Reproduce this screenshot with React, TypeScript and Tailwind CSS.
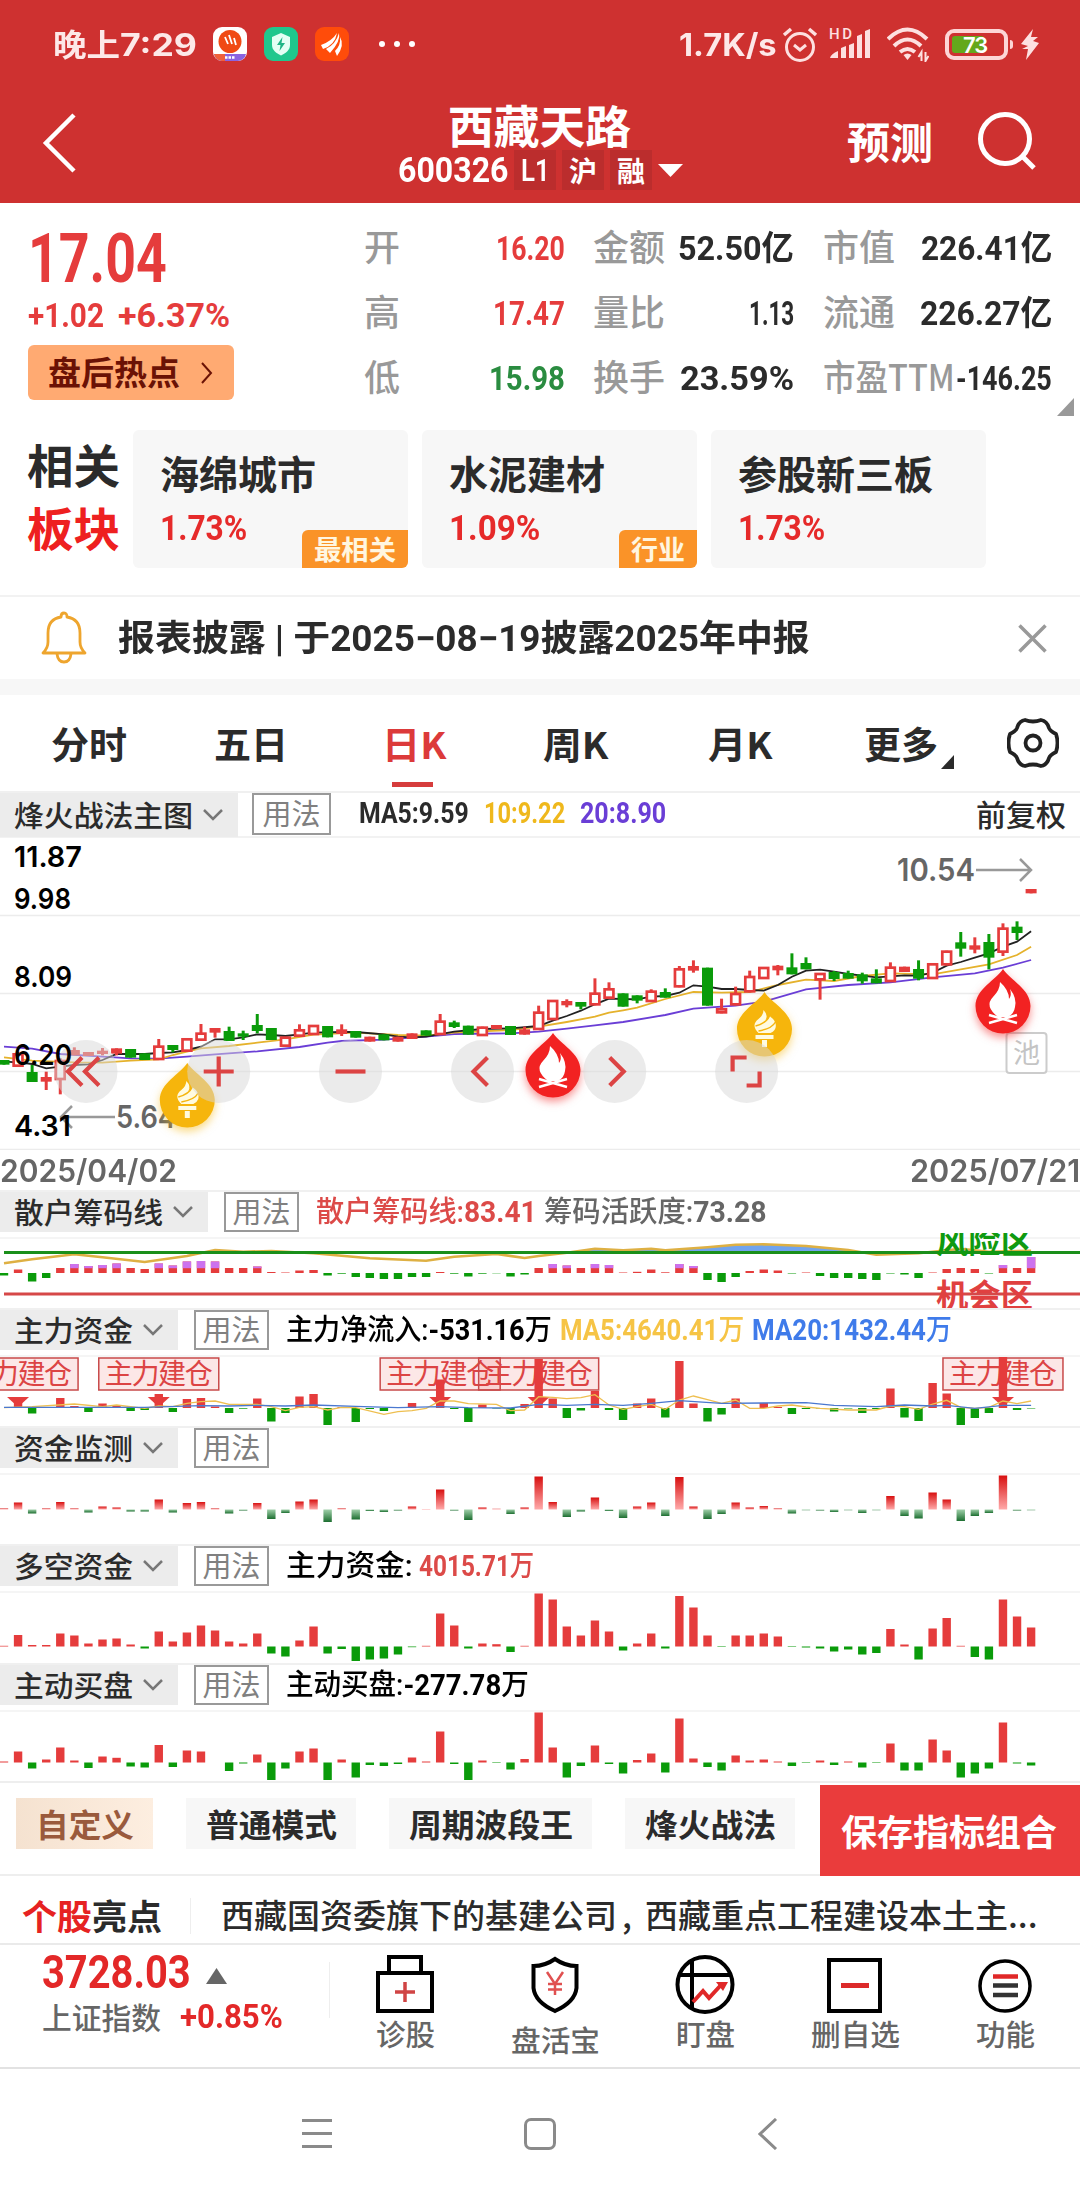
import { useLayoutEffect, useRef, useState, type ReactNode } from "react";
import { clsx } from "clsx";

const STEP = 14.07;
const cx = (i: number) => 4 + STEP * i;

const RED = "#e53c3c";
const GREEN = "#0a9b0a";

// Squeezes or stretches a run of text to a fixed width
function Fit({ w, className, children }: { w: number; className?: string; children: ReactNode }) {
  const ref = useRef<HTMLSpanElement>(null);
  const [scale, setScale] = useState(1);
  useLayoutEffect(() => {
    if (ref.current) setScale(w / ref.current.offsetWidth);
  }, [w]);
  return (
    <span className={clsx("block shrink-0 whitespace-nowrap leading-none", className)} style={{ width: w }}>
      <span ref={ref} className="inline-block origin-left" style={{ transform: `translateY(var(--lift)) scaleX(${scale})` }}>
        {children}
      </span>
    </span>
  );
}

const num = "font-[Roboto,'Noto_Sans_CJK_SC',sans-serif] [--lift:0em]";
const inter = "font-[Inter,'Noto_Sans_CJK_SC',sans-serif] [--lift:0em]";

type Candle = [kind: "r" | "s" | "g", top: number, bottom: number, high?: number, low?: number];

const candles: Candle[] = [
  ["g", 480, 494], ["r", 460, 500, 455], ["g", 516, 546, 495], ["s", 531, 545, 515, 570], ["r", 480, 540, 475, 583],
  ["s", 450, 466, 442], ["s", 456, 468], ["s", 452, 462, 444, 466], ["s", 445, 461, 445, 466], ["g", 447, 473],
  ["g", 460, 480], ["r", 437, 480, 417], ["g", 435, 450, 435, 457], ["r", 415, 455], ["r", 398, 422, 372],
  ["s", 384, 398, 384, 413], ["g", 393, 423, 380], ["g", 400, 410, 392, 420], ["g", 375, 393, 342, 400], ["g", 384, 420],
  ["r", 410, 440], ["r", 388, 410, 373], ["r", 375, 405], ["g", 378, 412], ["s", 388, 402, 373, 408],
  ["g", 393, 413], ["s", 410, 425], ["g", 403, 421], ["s", 410, 425], ["s", 400, 417],
  ["g", 391, 407], ["r", 362, 405, 342], ["g", 367, 381, 362, 384], ["g", 377, 404], ["r", 380, 408],
  ["s", 375, 387], ["g", 378, 405], ["s", 388, 404, 380], ["r", 335, 390, 317], ["r", 300, 360],
  ["s", 303, 316, 298, 322], ["g", 306, 320, 306, 328], ["r", 278, 316, 235], ["r", 265, 296, 247], ["g", 280, 320],
  ["g", 286, 302, 286, 310], ["r", 272, 306, 268], ["g", 276, 293, 265], ["r", 205, 262, 198], ["s", 198, 212, 181, 218],
  ["g", 203, 317], ["r", 325, 340, 296], ["r", 279, 316, 260], ["r", 228, 277, 212], ["r", 201, 237],
  ["s", 197, 211, 195, 226], ["g", 202, 223, 160], ["g", 189, 208, 172], ["r", 219, 241, 219, 299], ["g", 216, 237, 213, 243],
  ["g", 219, 236, 212], ["g", 223, 244, 218, 251], ["g", 235, 250, 208], ["r", 200, 246, 187], ["s", 200, 216],
  ["g", 207, 236, 181, 241], ["r", 190, 237], ["r", 152, 196], ["g", 127, 146, 96, 170], ["s", 136, 149, 112, 160],
  ["g", 126, 173, 102, 208], ["r", 83, 158, 70, 168], ["g", 80, 99, 64, 120], ["s", -33, -20],
];

const ma5 = [
  [0, 485], [1, 487], [2, 492], [3, 505], [4, 500], [5, 495], [6, 493], [7, 480], [8, 462], [10, 462], [11, 459], [12, 457],
  [13, 450], [14, 440], [15, 418], [16, 418], [17, 412], [18, 403], [19, 405], [20, 408], [21, 403], [22, 398], [24, 396],
  [25, 396], [27, 403], [28, 410], [29, 412], [30, 410], [32, 395], [34, 387], [36, 385], [38, 378], [39, 362], [40, 348],
  [41, 332], [42, 313], [43, 296], [44, 297], [45, 298], [46, 290], [47, 288], [48, 278], [49, 256], [50, 260], [51, 267],
  [52, 267], [53, 270], [54, 272], [55, 255], [56, 230], [57, 212], [58, 209], [59, 215], [60, 222], [61, 227], [62, 232],
  [63, 229], [64, 226], [65, 227], [66, 218], [67, 197], [68, 186], [69, 173], [70, 160], [71, 140], [72, 125], [73, 94],
];
const ma10 = [
  [0, 472], [2, 482], [5, 487], [7, 488], [9, 482], [11, 478], [12, 465], [13, 455], [14, 445], [16, 438], [18, 428],
  [20, 418], [22, 404], [25, 398], [28, 405], [30, 407], [32, 398], [36, 390], [38, 380], [40, 366], [42, 350], [43, 338],
  [44, 331], [45, 323], [47, 297], [49, 276], [51, 278], [53, 276], [55, 255], [57, 239], [59, 243], [61, 228], [63, 220],
  [66, 223], [68, 208], [70, 193], [72, 165], [73, 140],
];
const ma20 = [
  [0, 440], [2, 446], [4, 462], [7, 470], [9, 475], [11, 476], [13, 470], [15, 463], [18, 454], [21, 441], [23, 428],
  [24, 423], [27, 419], [30, 410], [32, 402], [36, 400], [38, 395], [40, 386], [42, 376], [44, 366], [47, 345], [49, 326],
  [52, 317], [54, 305], [57, 268], [60, 255], [63, 247], [66, 232], [69, 220], [71, 203], [73, 180],
];

const retail = [
  -2.5, 3.5, -8.5, -5, 5, 9, 7, 8, 9.5, 5, 4, 9.5, 7.5, 11.5, 12, 11.5, 5, 5, 6.5, 1, 0.5, 2.5, 3, -2.5, -0.7, -4, -5, -6, -6,
  -4, -4, 1, -0.7, -3.5, -0.7, -0.3, -3.5, -1.5, 5, 9, 7.5, 5, 9, 8, 0.5, 1.2, 3.5, 0.7, 9, 7, -7, -9, -4, 2, 3.5, 2.5, -0.5,
  0.5, -3, -5, -5, -6, -7, -0.5, -1.5, -5, 0.5, 4, 5, 4, -0.5, 8, 5, 16,
];
const retailLine = [
  [0, 220], [2, 208], [5, 193], [7, 202], [10, 216], [13, 198], [15, 180], [17, 185], [19, 183], [22, 190], [26, 205],
  [30, 212], [32, 200], [35, 192], [37, 204], [38, 198], [40, 188], [42, 176], [44, 181], [46, 176], [47, 181], [50, 172],
  [52, 164], [54, 163], [57, 168], [60, 180], [62, 194], [65, 190], [68, 176], [70, 185], [73, 182],
];

const mainFund = [
  0, 7, -5.5, 0, 10, 2, -4, 4.5, 2.5, -3, -2, 14, -4, 9, 10, 1.5, -5, -0.7, 9.5, -13.5, -5, 11.5, 14, -18, 1, -14, -1, -3, 0,
  5, 0, 28.5, -1, -14, 3.5, -0.5, -6, 4, 49, 9.5, -10, -2.5, 17, -2, -12, 4.5, 9.5, -9.5, 47, 4.5, -13.5, -6.5, 9.5, 0, 5, 1,
  -6, -1, -0.5, -3.5, -0.5, -5, -1, 19.5, -9.5, -13, 25, 14.5, -17, -10, -5, 51, -2, -0.5,
];
const fundMa5 = [
  [0, 653], [2, 650], [5, 642], [7, 650], [8, 645], [10, 655], [11, 648], [12, 650], [13, 640], [14, 635], [15, 633],
  [16, 643], [18, 643], [19, 650], [20, 662], [21, 652], [22, 650], [23, 660], [24, 652], [25, 653], [27, 673], [28, 665],
  [29, 662], [30, 655], [31, 633], [32, 633], [33, 641], [35, 643], [36, 662], [37, 660], [38, 620], [39, 622], [40, 626],
  [41, 623], [42, 614], [43, 645], [44, 658], [45, 650], [46, 643], [47, 658], [48, 630], [49, 618], [50, 629], [51, 640],
  [52, 630], [53, 655], [54, 655], [55, 648], [56, 645], [57, 651], [58, 655], [60, 660], [62, 660], [63, 648], [64, 650],
  [65, 658], [66, 642], [67, 631], [68, 652], [69, 655], [70, 652], [71, 633], [72, 641], [73, 633],
];
const fundMa20 = [
  [0, 652], [10, 652], [14, 647], [16, 648], [18, 646], [20, 648], [22, 645], [25, 649], [28, 653], [31, 650], [33, 653],
  [36, 654], [38, 643], [40, 646], [42, 643], [44, 646], [46, 640], [48, 632], [51, 640], [57, 638], [59, 646], [62, 650],
  [64, 645], [66, 648], [67, 646], [69, 655], [71, 646], [73, 646],
];

const monitor = [
  1, 7, -4, 1, 7.5, 1, -3, 3, 2, -2, -2, 10, -3, 6.5, 7.5, 1, -4, -1, 6.5, -9.5, -3.5, 8, 10, -12.5, 1, -10, -1.5, -2.5, -1,
  3, 0.5, 20, -1, -10.5, 2, 0.7, -4.5, 2, 33, 7.5, -7.5, -2, 12, -1.5, -8.5, 3, 7, -6.5, 32.5, 3, -9.5, -4.5, 7, 2, 3.5, 1,
  -4, -0.7, -1, -2.5, -0.7, -3.5, -0.7, 13.5, -6.5, -9, 17, 10, -11.5, -6.5, -3.5, 34, -1, -0.7,
];
const longShort = [
  0.7, 11.5, 1.5, 1.5, 13, 11, 3, 7, 8, 2, -2, 15, 5, 14, 21, 16, 5, 3, 13, -7, -10, 6, 20, -7, -2.5, -17, -13, -12, -8, -0.7,
  0.7, 33, 21, -2, 3, 2.3, -5.5, 0.7, 53, 47, 20, 11, 26, 15, -4, 3, 13, -2, 50.5, 39, 11, -0.5, 11, 11, 13, 10, -0.5, -1, -2,
  -5, -3, -8, -6.5, 17.5, 2, -13, 18, 28.5, 0.7, -10.5, -13, 47, 30, 19,
];
const activeBuy = [
  1, 11, -6, 3, 15, 2, -5.5, 6, 4.7, -4, -5, 17.5, -4.5, 12, 11, 0, -8.5, -1, 8, -17.5, -6, 11, 14, -20, 3, -15, -2.5, -3.5,
  -1.5, 5, 1, 31, -1.5, -19, 2, -0.5, -7, 3.5, 50, 15, -15, -3.5, 17, -1.5, -11, 2.5, 9, -10, 44, 4, -4.5, -8, 7, 2, 3, 1,
  -3.5, -0.5, 2, -2.5, 1, -5, -0.5, 19, -8, -8, 23, 12, -15, -11, -6, 40, -1, -3,
];

const toPoints = (pts: number[][], offset: number) =>
  pts.map(([i, y]) => `${cx(i).toFixed(1)},${(y / 3 + offset).toFixed(1)}`).join(" ");

function Bars({ data, base, fade }: { data: number[]; base: number; fade?: boolean }) {
  return (
    <>
      {data.map((v, i) => (
        <rect
          key={i}
          x={cx(i) - 4.2}
          y={v >= 0 ? base - v : base}
          width={8.4}
          height={Math.abs(v)}
          fill={v >= 0 ? (fade ? "url(#up)" : RED) : fade ? "url(#down)" : GREEN}
        />
      ))}
    </>
  );
}

function StatusBar() {
  return (
    <div className="flex h-[88px] items-center pl-[53px] text-[#fde8e8]">
      <div className={clsx(inter, "flex items-center text-[31px] font-bold")}>
        <Fit w={67}>晚上</Fit>
        <Fit w={77}>7:29</Fit>
      </div>
      <div className="ml-[16px] flex gap-[17px]">
        <svg width="34" height="34" viewBox="0 0 34 34">
          <rect width="34" height="34" rx="9" fill="#fff" />
          <circle cx="17" cy="14.5" r="11.5" fill="#f04a14" />
          <path d="M12 10l3 7M16 8l3 9M21 11l2 7" stroke="#fff" strokeWidth="1.8" />
          <path d="M1 27H33a9 9 0 0 1-8 7H9a9 9 0 0 1-8-7z" fill="#8a63e0" />
          <path d="M1 27H12V34H9a9 9 0 0 1-8-7z" fill="#f0603c" />
          <path d="M12 30.5h10" stroke="#fff" strokeWidth="2.5" strokeDasharray="2.5 1" />
        </svg>
        <svg width="34" height="34" viewBox="0 0 34 34">
          <rect width="34" height="34" rx="9" fill="#1fc78d" />
          <path d="M17 6l9 4v8c0 5-4 8-9 10.500c-5-2.500-9-5.500-9-10.500v-8z" fill="#e4fff4" />
          <path d="M18.500 10l-5.500 8h3.500l-1 6 5.500-8h-3.500z" fill="#1fb585" />
        </svg>
        <svg width="34" height="34" viewBox="0 0 34 34">
          <rect width="34" height="34" rx="9" fill="#ff4c0a" />
          <path d="M6 18q11-4 16-12q-2 12-14 16zM11 22q10-5 13-16q2 8-9 20zM20 24q6-6 5-14q5 8-3 19z" fill="#fff" />
        </svg>
      </div>
      <div className="ml-[30px] flex gap-[9px]">
        <i className="size-[6px] rounded-full bg-white" />
        <i className="size-[6px] rounded-full bg-white" />
        <i className="size-[6px] rounded-full bg-white" />
      </div>
      <div className="ml-auto flex items-center pr-[41px]">
        <Fit w={98} className={clsx(inter, "text-[31px] font-bold")}>1.7K/s</Fit>
        <svg className="ml-[5px]" width="36" height="36" viewBox="0 0 36 36" fill="none" stroke="#fde0e0" strokeWidth="3">
          <circle cx="18" cy="21" r="13.500" />
          <path d="M12 19l6 5 6-5" />
          <path d="M2 9l7-6M34 9l-7-6" strokeWidth="3.500" />
        </svg>
        <svg className="ml-[11px]" width="42" height="36" viewBox="0 0 42 36" fill="#fde0e0">
          <text x="0" y="13" fontSize="15" fontWeight="500" fontFamily="Roboto, sans-serif" textLength="23">HD</text>
          <path d="M1 32q1-4 8-7v7zM12 22l5-2v12h-5zM20 19l5-2v15h-5zM28 10l5-2v24h-5zM36 5l5-2v29h-5z" />
        </svg>
        <svg className="ml-[16px]" width="42" height="36" viewBox="0 0 42 36" fill="none" stroke="#fde0e0" strokeWidth="4">
          <path d="M1 13q19.500-19 39 0M7 20q13.500-13 27 0M13 26q7.500-6 15 0" />
          <path d="M16.500 29q4-3 8 0l-4 5z" fill="#fde0e0" stroke="none" />
          <path d="M34.500 35v-9l-3 5M38.500 26v9l3-5" strokeWidth="2" />
        </svg>
        <div className="ml-[16px] flex h-[31px] w-[63px] rounded-[9px] border-[4px] border-[#fdd6d6] p-[3px]">
          <div className="relative h-full w-[32px] rounded-[3px] bg-[#64a81c]">
            <span className="absolute -top-[2px] left-[11px] font-[Inter,sans-serif] text-[22px] font-semibold leading-[22px] tracking-[-1px] text-white">73</span>
          </div>
        </div>
        <i className="ml-[2px] h-[9px] w-[3px] rounded-r bg-[#fdd6d6]" />
        <svg className="ml-[8px]" width="18" height="31" viewBox="0 0 18 31" fill="#fde0e0">
          <path d="M12 0L0 15l7 2-6 3h6L5 31 18 14l-6-2 5-4h-7z" />
        </svg>
      </div>
    </div>
  );
}

function Header() {
  return (
    <header className="h-[203px] bg-[#ce3130] text-white">
      <StatusBar />
      <div className="flex h-[115px] items-start pl-[42px]">
        <svg className="mt-[25px]" width="34" height="60" viewBox="0 0 34 60" fill="none" stroke="#fff" strokeWidth="4.500">
          <path d="M32 2L4 30l28 28" />
        </svg>
        <div className="ml-[322px] w-[286px]">
          <Fit w={183} className="mt-[16px] ml-[50px] text-[45px] font-bold">西藏天路</Fit>
          <div className="mt-[1px] flex h-[40px] items-center">
            <Fit w={110} className={clsx(num, "text-[35px] font-bold")}>600326</Fit>
            <span className="ml-[6px] flex h-[40px] w-[42px] items-center justify-center bg-[#bb2d2d]">
              <Fit w={29} className={clsx(num, "text-[32px] font-semibold")}>L1</Fit>
            </span>
            <span className="ml-[6px] flex h-[40px] w-[42px] items-center justify-center bg-[#bb2d2d] text-[28px] leading-none font-bold">沪</span>
            <span className="ml-[6px] flex h-[40px] w-[42px] items-center justify-center bg-[#bb2d2d] text-[28px] leading-none font-bold">融</span>
            <svg className="ml-[6px]" width="25" height="13" viewBox="0 0 25 13" fill="#fff">
              <path d="M0 0h25L12.500 13z" />
            </svg>
          </div>
        </div>
        <Fit w={86} className="mt-[33px] ml-[163px] text-[43px] font-bold">预测</Fit>
        <svg className="mt-[23px] ml-[44px]" width="60" height="60" viewBox="0 0 60 60" fill="none" stroke="#fff" strokeWidth="5">
          <circle cx="28" cy="28" r="24.500" />
          <path d="M45 45l12 12" />
        </svg>
      </div>
    </header>
  );
}

type Stat = { label: string; lw: number; value: string; vw: number; tone?: string };

const columns: { width: string; rows: Stat[] }[] = [
  {
    width: "w-[201px]",
    rows: [
      { label: "开", lw: 36, value: "16.20", vw: 69, tone: "text-[#e53c3c]" },
      { label: "高", lw: 36, value: "17.47", vw: 72, tone: "text-[#e53c3c]" },
      { label: "低", lw: 36, value: "15.98", vw: 76, tone: "text-[#2a8c40]" },
    ],
  },
  {
    width: "w-[201px] ml-[28px]",
    rows: [
      { label: "金额", lw: 72, value: "52.50亿", vw: 116 },
      { label: "量比", lw: 72, value: "1.13", vw: 45 },
      { label: "换手", lw: 72, value: "23.59%", vw: 114 },
    ],
  },
  {
    width: "w-[229px] ml-[29px]",
    rows: [
      { label: "市值", lw: 72, value: "226.41亿", vw: 131 },
      { label: "流通", lw: 72, value: "226.27亿", vw: 132 },
      { label: "市盈TTM", lw: 132, value: "-146.25", vw: 96 },
    ],
  },
];

function Quote() {
  return (
    <section className="flex h-[227px] pl-[28px]">
      <div className="w-[336px] text-[#e53c3c]">
        <Fit w={139} className={clsx(num, "mt-[22px] text-[68px] font-bold")}>17.04</Fit>
        <div className={clsx(num, "mt-[5px] flex gap-[14px] text-[34px] font-bold")}>
          <Fit w={76}>+1.02</Fit>
          <Fit w={112}>+6.37%</Fit>
        </div>
        <div className="mt-[13px] flex h-[55px] w-[206px] items-center rounded-[6px] bg-[#ffaa72] pl-[20px] text-[#6b1205]">
          <Fit w={132} className="text-[33px] font-bold">盘后热点</Fit>
          <svg className="ml-[21px]" width="12" height="22" viewBox="0 0 12 22" fill="none" stroke="currentColor" strokeWidth="2">
            <path d="M1 1l9 10-9 10" />
          </svg>
        </div>
      </div>
      {columns.map((col, i) => (
        <div key={i} className={clsx("mt-[12px]", col.width)}>
          {col.rows.map((r) => (
            <div key={r.label} className="flex h-[65px] items-center justify-between">
              <Fit w={r.lw} className="-mt-[4px] text-[36px] font-medium text-[#999]">{r.label}</Fit>
              <Fit w={r.vw} className={clsx(num, "text-[34px] font-bold", r.tone ?? "text-[#2b2b2b]")}>{r.value}</Fit>
            </div>
          ))}
        </div>
      ))}
      <svg className="mt-[195px] ml-[5px]" width="17" height="18" viewBox="0 0 17 18" fill="#999">
        <path d="M17 0v18H0z" />
      </svg>
    </section>
  );
}

const sectors = [
  { name: "海绵城市", nw: 156, pct: "1.73%", pw: 87, tag: "最相关", tw: 82 },
  { name: "水泥建材", nw: 156, pct: "1.09%", pw: 91, tag: "行业", tw: 54 },
  { name: "参股新三板", nw: 195, pct: "1.73%", pw: 87 },
];

function Related() {
  return (
    <section className="flex h-[167px] border-b-2 border-[#f2f2f2] pl-[27px]">
      <div className="w-[106px] font-bold">
        <Fit w={93} className="mt-[12px] text-[46px] text-[#2b2b2b]">相关</Fit>
        <Fit w={93} className="mt-[17px] text-[46px] text-[#ee2020]">板块</Fit>
      </div>
      <div className="flex gap-[14px]">
        {sectors.map((s) => (
          <div key={s.name} className="relative h-[138px] w-[275px] rounded-[6px] bg-[#f7f7f7] pl-[27px]">
            <Fit w={s.nw} className="mt-[25px] text-[39px] font-bold text-[#2b2b2b]">{s.name}</Fit>
            <Fit w={s.pw} className={clsx(num, "mt-[17px] text-[35px] font-bold text-[#e62a2a]")}>{s.pct}</Fit>
            {s.tag && (
              <span className="absolute right-0 bottom-0 flex h-[38px] items-center rounded-tl-[6px] rounded-br-[6px] bg-[#fa9328] px-[12px] text-[27px] font-bold text-[#fff6e0]">
                <Fit w={s.tw!}>{s.tag}</Fit>
              </span>
            )}
          </div>
        ))}
      </div>
    </section>
  );
}

function News() {
  return (
    <section className="flex h-[98px] items-center border-b-[16px] border-[#f7f7f7] pl-[40px]">
      <svg width="48" height="54" viewBox="0 0 48 54" fill="none" stroke="#eea52e" strokeWidth="2.800">
        <path d="M3 42h42q-5-5-5-11V22q0-14-13-16q0-4-3-4t-3 4Q8 8 8 22v9q0 6-5 11zM17 43q1 8 7 8t7-8" strokeLinejoin="round" />
      </svg>
      <Fit w={692} className={clsx(num, "mt-[2px] ml-[30px] text-[36px] font-bold text-[#2b2b2b]")}>报表披露 | 于2025−08−19披露2025年中报</Fit>
      <svg className="ml-[208px]" width="29" height="29" viewBox="0 0 29 29" fill="none" stroke="#999" strokeWidth="3.500">
        <path d="M1.500 1.500l26 26M27.500 1.500l-26 26" />
      </svg>
    </section>
  );
}

const tabs = [
  { name: "分时", w: 76, ml: "ml-[51px]" },
  { name: "五日", w: 74, ml: "ml-[87px]" },
  { name: "日K", w: 64, ml: "ml-[94px]", active: true },
  { name: "周K", w: 65, ml: "ml-[97px]" },
  { name: "月K", w: 64, ml: "ml-[100px]" },
  { name: "更多", w: 74, ml: "ml-[92px]" },
];

function Tabs() {
  return (
    <nav className="relative flex h-[98px] items-center border-b-2 border-[#f0f0f0] text-[37px] font-bold text-[#2b2b2b]">
      {tabs.map((t) => (
        <div key={t.name} className={clsx("relative pt-[2px]", t.ml, t.active && "text-[#dc3a3a]")}>
          <Fit w={t.w}>{t.name}</Fit>
          {t.active && <i className="absolute top-[58px] left-[10px] h-[5px] w-[41px] bg-[#d63c3c]" />}
        </div>
      ))}
      <svg className="mt-[38px] ml-[3px]" width="13" height="14" viewBox="0 0 13 14" fill="#2b2b2b">
        <path d="M13 0v14H0z" />
      </svg>
      <svg className="ml-[53px]" width="52" height="52" viewBox="0 0 52 52" fill="none" stroke="#222" strokeWidth="3.800" strokeLinejoin="round">
        <path d="M18 3Q26 6 34 3Q40 4 42 11Q43 14 49 17Q52 26 49 35Q43 38 42 41Q40 48 34 49Q26 46 18 49Q12 48 10 41Q9 38 3 35Q0 26 3 17Q9 14 10 11Q12 4 18 3z" />
        <circle cx="26" cy="26" r="7.500" />
      </svg>
    </nav>
  );
}

function Usage({ className }: { className?: string }) {
  return (
    <span className={clsx("flex h-[40px] items-center justify-center border-2 border-[#999] bg-white pb-[4px] text-[29px] leading-none text-[#808080]", className)}>
      用法
    </span>
  );
}

function Selector({ name, w, className }: { name: string; w: number; className?: string }) {
  return (
    <div className={clsx("flex items-center bg-[#ececec] pl-[14px] text-[#2b2b2b]", className)}>
      <Fit w={w} className="text-[29px] font-medium">{name}</Fit>
      <svg className="-mt-[1px] ml-[10px]" width="20" height="12" viewBox="0 0 20 12" fill="none" stroke="#777" strokeWidth="2.500">
        <path d="M1 1l9 9 9-9" />
      </svg>
    </div>
  );
}

function Pin({ x, y, gold }: { x: number; y: number; gold?: boolean }) {
  const color = gold ? "#f6b50c" : "#f22222";
  return (
    <g transform={`translate(${x} ${y})`}>
      <path
        d="M0 0C7 11 27.500 20 27.500 37A27.500 27.500 0 0 1-27.500 37C-27.500 20-7 11 0 0z"
        fill={color}
        style={{ filter: `drop-shadow(0 4px 4px ${color}80)` }}
      />
      {gold ? (
        <g fill="#fffbe0">
          <path d="M-6 41Q-14 33-6 27Q-1 23-1 18Q4 23 1 28Q4 27 5 24Q9 27 10 29Q14 37 6 41z" />
          <path d="M-9 34Q2 31 5 24M-6 39Q7 37 11 30" fill="none" stroke={color} strokeWidth="1.500" />
          <path d="M-9 43H9V47H-9zM-2.500 48H2.500V55H-2.500z" />
        </g>
      ) : (
        <g fill="#fff">
          <path d="M-5 48Q-19 37-10 28Q-3 21-3 13Q6 21 6 30Q9 26 7 20Q14 29 12 38Q11 45 5 48z" />
          <path d="M-14 54L14 46M-14 46L14 54" stroke="#fff" strokeWidth="2.500" />
        </g>
      )}
    </g>
  );
}

const controls = [
  { x: 86, d: "M-4-14L-18 0L-4 14M13-14L-1 0L13 14" },
  { x: 218.7, d: "M-15 0H15M0-15V15" },
  { x: 350.500, d: "M-15 0H15" },
  { x: 482.500, d: "M5-14L-9 0L5 14" },
  { x: 614.700, d: "M-5-14L9 0L-5 14" },
  { x: 746.600, d: "M0-14H-14V0M0 14H13V0" },
];

function KLine() {
  return (
    <svg className="block h-[312px] w-full" viewBox="0 0 1080 312" fontFamily="Inter, 'Noto Sans CJK SC', sans-serif">
      {[77.5, 155.5, 233.5, 311.500].map((y) => (
        <path key={y} d={`M0 ${y}H1080`} stroke="#ececec" strokeWidth="1.500" />
      ))}
      <g fill="none" strokeWidth="1.800">
        <polyline points={toPoints(ma20, 62)} stroke="#6a3ed6" />
        <polyline points={toPoints(ma10, 62)} stroke="#e5b22c" />
        <polyline points={toPoints(ma5, 62)} stroke="#222" />
      </g>
      {candles.map(([kind, top, bottom, high = top, low = bottom], i) => {
        const x = cx(i);
        const t = top / 3 + 62;
        const b = bottom / 3 + 62;
        const color = kind === "g" ? GREEN : RED;
        return (
          <g key={i}>
            <path d={`M${x} ${high / 3 + 62}V${low / 3 + 62}`} stroke={color} strokeWidth="3" />
            {kind === "r" ? (
              <rect x={x - 4.400} y={t + 1} width="8.800" height={Math.max(b - t - 2, 1)} fill="#fff" stroke={color} strokeWidth="2.700" />
            ) : (
              <rect x={x - 5.500} y={t} width="11" height={b - t} fill={color} />
            )}
          </g>
        );
      })}
      <g fill="none" stroke="#999" strokeWidth="2.500">
        <path d="M976 32H1031M1020 21L1031 32L1020 43" />
        <path d="M115 279H61M72 268L61 279L72 290" />
      </g>
      <g fill="#666" fontSize="31" fontWeight="600">
        <text x="897" y="43" textLength="78" lengthAdjust="spacingAndGlyphs">10.54</text>
        <text x="116" y="290" textLength="60" lengthAdjust="spacingAndGlyphs">5.64</text>
      </g>
      <rect x="1006.500" y="195" width="40" height="40" rx="3" fill="#fff" stroke="#ccc" strokeWidth="2" />
      <text x="1013" y="225" fontSize="27" fill="#c4c4c4">池</text>
      <Pin x={187.300} y={225} gold />
      <Pin x={764.500} y={154} gold />
      <Pin x={553} y={195} />
      <Pin x={1003} y={131} />
      {controls.map((c) => (
        <g key={c.x} transform={`translate(${c.x} 233.500)`}>
          <circle r="31.500" fill="#d8d8d8" fillOpacity="0.5" />
          <path d={c.d} fill="none" stroke="#dc4444" strokeWidth="4.200" />
        </g>
      ))}
      <g fill="#000" fontSize="29" fontWeight="600">
        <text x="14" y="28.500" textLength="68" lengthAdjust="spacingAndGlyphs">11.87</text>
        <text x="14" y="70.500" textLength="57" lengthAdjust="spacingAndGlyphs">9.98</text>
        <text x="14" y="149" textLength="58" lengthAdjust="spacingAndGlyphs">8.09</text>
        <text x="14" y="227" textLength="58" lengthAdjust="spacingAndGlyphs">6.20</text>
        <text x="14" y="298" textLength="57" lengthAdjust="spacingAndGlyphs">4.31</text>
      </g>
    </svg>
  );
}

function Panel({ name, w, wide, tall, legend, children }: { name: string; w: number; wide?: boolean; tall?: boolean; legend?: ReactNode; children: ReactNode }) {
  return (
    <section className={clsx("relative overflow-hidden border-t-2 border-[#f0f0f0]", tall ? "h-[119px]" : "h-[118px]")}>
      <div className="flex h-[40px] items-center">
        <Selector name={name} w={w} className={clsx("h-[40px]", wide ? "w-[208px]" : "w-[178px]")} />
        <Usage className="ml-[16px] w-[75px]" />
        <div className={clsx(num, "ml-[17px] flex items-center text-[29px] font-medium text-black")}>{legend}</div>
      </div>
      <div className="relative mt-[5px] border-t-2 border-[#f5f5f5]">
        <svg className="block h-[68px] w-full" viewBox="0 0 1080 68" fontFamily="'Noto Sans CJK SC', sans-serif">
          {children}
        </svg>
      </div>
    </section>
  );
}

const signals = [1, 11, 31, 38, 71];

function Indicators() {
  const line = toPoints(retailLine, -49);
  return (
    <>
      <div className="relative">
        <Panel
          name="散户筹码线"
          w={149}
          wide
          legend={
            <>
              <Fit w={221} className="text-[#dc4a48]">散户筹码线:<b className="font-bold">83.41</b></Fit>
              <Fit w={223} className="ml-[7px] text-[#666]">筹码活跃度:<b className="font-bold">73.28</b></Fit>
            </>
          }
        >
          <clipPath id="above">
            <rect width="1080" height="13" />
          </clipPath>
          <polygon points={`${cx(0)},13 ${line} ${cx(73)},13`} fill="#70a4ee" clipPath="url(#above)" />
          <polyline points={line} fill="none" stroke="#deb043" strokeWidth="2.600" />
          <Bars data={retail} base={34} />
          {retail.map((v, i) => v > 5 && <rect key={i} x={cx(i) - 4.200} y={34 - v} width="8.400" height={v - 4.800} fill="#cc72ee" />)}
          <path d="M4 13.500H1080" stroke="#1a8f1a" strokeWidth="3" />
          <path d="M4 55H1080" stroke="#d64848" strokeWidth="3" />
        </Panel>
        <div className="absolute top-[43px] left-[936px] h-[23px] overflow-hidden text-[#0f9a10]">
          <Fit w={97} className="-mt-[9px] text-[32px] font-bold">风险区</Fit>
        </div>
        <div className="absolute top-[88px] left-[936px] h-[30px] overflow-hidden text-[#e04040]">
          <Fit w={97} className="text-[32px] font-bold">机会区</Fit>
        </div>
      </div>

      <Panel
        name="主力资金"
        w={119}
        legend={
          <>
            <Fit w={266}>主力净流入:<b className="font-bold">-531.16</b>万</Fit>
            <Fit w={184} className="ml-[8px] text-[#f6c445]"><b className="font-bold">MA5:4640.41</b>万</Fit>
            <Fit w={200} className="ml-[8px] text-[#3f7bea]"><b className="font-bold">MA20:1432.44</b>万</Fit>
          </>
        }
      >
        {signals.map((i) => (
          <g key={i}>
            <rect x={cx(i) - 60} y="1" width="120" height="32" fill="#e53c3c" fillOpacity="0.12" stroke="#c84a4a" strokeWidth="1.500" />
            <text x={cx(i) - 54} y="27" textLength="108" fontSize="28" fill="#dc4444">主力建仓</text>
            <path d={`M${cx(i) - 11} 40H${cx(i) + 11}L${cx(i)} 50z`} fill={RED} />
          </g>
        ))}
        <Bars data={mainFund} base={51} />
        <polyline points={toPoints(fundMa5, -167)} fill="none" stroke="#eebf50" strokeWidth="1.300" />
        <polyline points={toPoints(fundMa20, -167)} fill="none" stroke="#4a78d0" strokeWidth="1.300" />
      </Panel>

      <Panel name="资金监测" w={119}>
        <defs>
          <linearGradient id="up" x2="0" y2="1">
            <stop offset="0" stopColor="#d81010" />
            <stop offset="1" stopColor="#ffaaaa" />
          </linearGradient>
          <linearGradient id="down" x2="0" y2="1">
            <stop offset="0" stopColor="#a0d0aa" />
            <stop offset="1" stopColor="#1c6e30" />
          </linearGradient>
        </defs>
        <Bars data={monitor} base={34.500} fade />
      </Panel>

      <Panel
        name="多空资金"
        w={119}
        tall
        legend={
          <>
            <Fit w={127}>主力资金:</Fit>
            <Fit w={115} className="ml-[6px] text-[#dc4a48]"><b className="font-bold">4015.71</b>万</Fit>
          </>
        }
      >
        <Bars data={longShort} base={53.500} />
      </Panel>

      <Panel name="主动买盘" w={119} legend={<Fit w={243}>主动买盘:<b className="font-bold">-277.78</b>万</Fit>}>
        <Bars data={activeBuy} base={50.500} />
      </Panel>
    </>
  );
}

function Presets() {
  return (
    <div className="flex h-[95px] border-y-2 border-[#eee] text-[32px] font-bold text-[#2b2b2b]">
      <span className="mt-[15px] ml-[16px] flex h-[51px] w-[137px] items-center justify-center bg-linear-to-r from-[#f5e2d0] to-[#fdeee0] text-[#9a5a3c]">
        <Fit w={98}>自定义</Fit>
      </span>
      <span className="mt-[15px] ml-[33px] flex h-[51px] w-[170px] items-center justify-center bg-[#f7f7f7]"><Fit w={131}>普通模式</Fit></span>
      <span className="mt-[15px] ml-[33px] flex h-[51px] w-[203px] items-center justify-center bg-[#f7f7f7]"><Fit w={164}>周期波段王</Fit></span>
      <span className="mt-[15px] ml-[33px] flex h-[51px] w-[170px] items-center justify-center bg-[#f7f7f7]"><Fit w={131}>烽火战法</Fit></span>
      <span className="mt-[2px] ml-[25px] flex h-[91px] w-[260px] items-center justify-center bg-[#ea3c3c] pr-[2px] text-[36px] text-white">
        <Fit w={216}>保存指标组合</Fit>
      </span>
    </div>
  );
}

function Highlight() {
  return (
    <div className="flex h-[69px] items-center border-b-2 border-[#eaeaea] pt-[12px] pl-[22px] text-[#2b2b2b]">
      <Fit w={70} className="text-[35px] font-bold text-[#e62222]">个股</Fit>
      <Fit w={70} className="text-[35px] font-bold">亮点</Fit>
      <i className="ml-[28px] h-[36px] w-px bg-[#eee]" />
      <Fit w={817} className="ml-[30px] text-[33px] font-medium">
        西藏国资委旗下的基建公司<span className="inline-block w-[28px] pl-[5px]">,</span>西藏重点工程建设本土主...
      </Fit>
    </div>
  );
}

const black = { fill: "none", stroke: "#000", strokeWidth: 4 };

const actions = [
  {
    label: "诊股",
    w: 59,
    icon: (
      <>
        <path {...black} d="M3 18H57V56H3zM14 17V2H46V17" />
        <path d="M20 37H40M30 27V47" stroke="#d04444" strokeWidth="3.500" />
      </>
    ),
  },
  {
    label: "盘活宝",
    w: 89,
    low: true,
    icon: (
      <>
        <path {...black} d="M30 4Q40 11 51.500 11V33Q50 47 30 56Q10 47 8.500 33V11Q20 11 30 4z" />
        <path d="M22 17L30 29L38 17M30 28V40M23 29H37M23 34.500H37" stroke="#e05050" strokeWidth="2.500" fill="none" />
      </>
    ),
  },
  {
    label: "盯盘",
    w: 59,
    icon: (
      <>
        <circle {...black} cx="30" cy="29.500" r="27.500" />
        <path {...black} d="M4 20H56M17 5V53" />
        <path d="M18 47L28 36L34 43L46 30" fill="none" stroke="#e02828" strokeWidth="4" />
        <path d="M41 27H53L48 36z" fill="#e02828" />
      </>
    ),
  },
  {
    label: "删自选",
    w: 89,
    icon: (
      <>
        <rect {...black} x="4" y="5" width="51" height="51" />
        <path d="M16 30.500H44" stroke="#dc2a2a" strokeWidth="5" />
      </>
    ),
  },
  {
    label: "功能",
    w: 59,
    icon: (
      <>
        <circle {...black} strokeWidth={3.500} cx="30" cy="31" r="25" />
        <path d="M18 21.500H43" stroke="#e02828" strokeWidth="4.500" />
        <path d="M18 30.500H43M18 40H43" stroke="#333" strokeWidth="4.500" />
      </>
    ),
  },
];

function BottomBar() {
  return (
    <div className="flex h-[124px] border-b-2 border-[#e2e2e2]">
      <div className="w-[329px] pl-[42px]">
        <div className="mt-[4px] flex items-center">
          <Fit w={149} className={clsx(num, "text-[46px] font-bold text-[#e32828]")}>3728.03</Fit>
          <svg className="mt-[8px] ml-[15px]" width="21" height="16" viewBox="0 0 21 16" fill="#666"><path d="M10.500 0L21 16H0z" /></svg>
        </div>
        <div className="mt-[5px] flex items-center">
          <Fit w={119} className="text-[30px] font-medium text-[#666]">上证指数</Fit>
          <Fit w={103} className={clsx(num, "ml-[19px] text-[33px] font-bold text-[#e32828]")}>+0.85%</Fit>
        </div>
      </div>
      <i className="mt-[17px] h-[56px] w-px bg-[#eee]" />
      <div className="flex">
        {actions.map((a) => (
          <div key={a.label} className="flex w-[150px] flex-col items-center">
            <svg className="mt-[10px]" width="60" height="60" viewBox="0 0 60 60">{a.icon}</svg>
            <Fit w={a.w} className={clsx("text-[29px] font-medium text-[#666]", a.low ? "mt-[11px]" : "mt-[5px]")}>{a.label}</Fit>
          </div>
        ))}
      </div>
    </div>
  );
}

export default function App() {
  return (
    <div className="h-[2198px] w-[1080px] overflow-hidden bg-white font-['Noto_Sans_CJK_SC',sans-serif] [--lift:-0.04em]">
      <Header />
      <Quote />
      <Related />
      <News />
      <Tabs />
      <div className="flex h-[45px] items-start border-b-2 border-[#f2f2f2]">
        <Selector name="烽火战法主图" w={179} className="h-[44px] w-[238px]" />
        <Usage className="ml-[14px] h-[42px]! w-[79px]" />
        <div className={clsx(num, "mt-[5px] ml-[28px] flex gap-[15px] text-[30px] font-bold text-[#2b2b2b]")}>
          <Fit w={110}>MA5:9.59</Fit>
          <Fit w={81} className="text-[#efb81c]">10:9.22</Fit>
          <Fit w={86} className="text-[#6a3ed6]">20:8.90</Fit>
        </div>
        <Fit w={90} className="mt-[6px] mr-[14px] ml-auto text-[30px] font-medium text-[#2b2b2b]">前复权</Fit>
      </div>
      <KLine />
      <div className={clsx(inter, "flex h-[40px] items-center justify-between text-[31px] font-semibold text-[#666]")}>
        <Fit w={177}>2025/04/02</Fit>
        <Fit w={170}>2025/07/21</Fit>
      </div>
      <Indicators />
      <Presets />
      <Highlight />
      <BottomBar />
      <div className="flex h-[129px] items-center pl-[302px]">
        <div className="flex w-[30px] flex-col gap-[10px]">
          <i className="h-[3px] bg-[#8a8a8a]" />
          <i className="h-[3px] bg-[#8a8a8a]" />
          <i className="h-[3px] bg-[#8a8a8a]" />
        </div>
        <i className="ml-[192px] size-[32px] rounded-[7px] border-[3px] border-[#8a8a8a]" />
        <svg className="ml-[202px]" width="20" height="32" viewBox="0 0 20 32" fill="none" stroke="#8a8a8a" strokeWidth="3">
          <path d="M18 1L2 16l16 15" />
        </svg>
      </div>
    </div>
  );
}
